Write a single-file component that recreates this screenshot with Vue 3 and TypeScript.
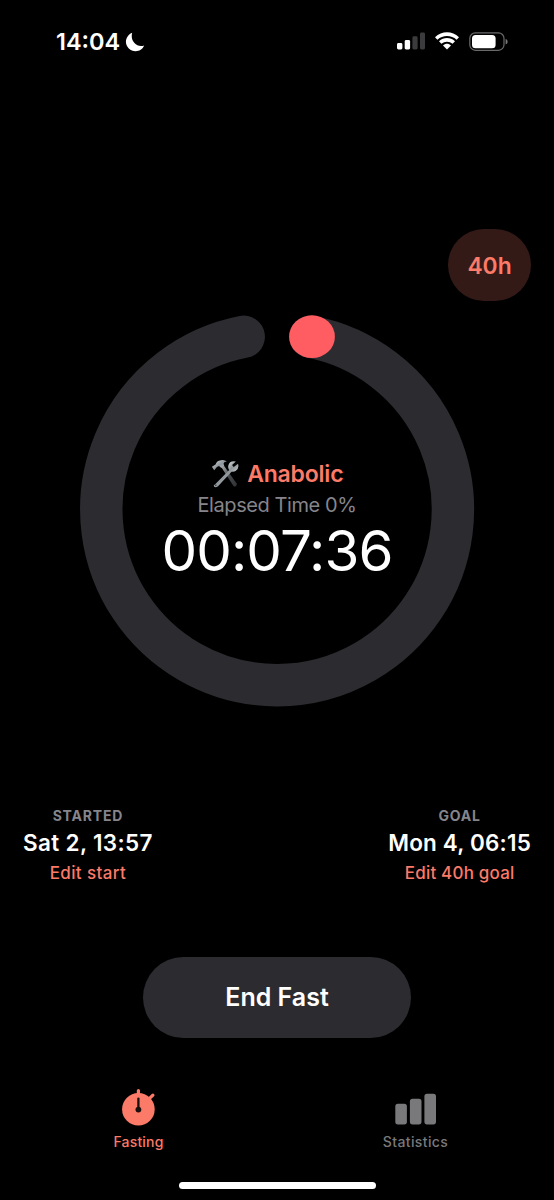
<script setup lang="ts">
interface Period {
  label: string
  value: string
  action: string
  side: string
}

const periods: Period[] = [
  { label: 'STARTED', value: 'Sat 2, 13:57', action: 'Edit start', side: 'start' },
  { label: 'GOAL', value: 'Mon 4, 06:15', action: 'Edit 40h goal', side: 'goal' },
]
</script>

<template>
  <main class="screen">
    <header class="status">
      <div class="clock">
        <span class="time">14:04</span>
        <svg class="moon" width="20" height="20" viewBox="0 0 20 20">
          <path d="M7.2 .8A9.5 9.5 0 1 0 19.2 13.4C12.2 16.2 4.7 9.2 7.2 .8Z" fill="#fff" />
        </svg>
      </div>
      <div class="indicators">
        <svg width="29" height="18" viewBox="0 0 29 18">
          <rect x="0" y="11" width="5.4" height="6.5" rx="1.4" fill="#fff" />
          <rect x="7.7" y="8" width="5.4" height="9.5" rx="1.4" fill="#fff" />
          <rect x="15.4" y="4.3" width="5.2" height="13.2" rx="1.4" fill="#3b3b3d" />
          <rect x="23" y=".5" width="5" height="17" rx="1.4" fill="#3b3b3d" />
        </svg>
        <svg class="wifi" width="24" height="18" viewBox="0 0 24 18">
          <path d="M0 5.2C6.8-1.4 17.2-1.4 24 5.2L21.6 7.7C16.2 2.7 7.8 2.7 2.4 7.7Z" fill="#fff" />
          <path d="M4 9.3C8.6 5 15.4 5 20 9.3L17.6 11.8C14.3 8.9 9.7 8.9 6.4 11.8Z" fill="#fff" />
          <path d="M8 13.4C10.3 11.3 13.7 11.3 16 13.4L12 17.6Z" fill="#fff" />
        </svg>
        <svg class="battery" width="40" height="20" viewBox="0 0 40 20">
          <rect x=".8" y=".9" width="34.2" height="17.4" rx="5.5" fill="none" stroke="#6a6a6c" stroke-width="1.2" />
          <rect x="3" y="3" width="23.6" height="13.2" rx="3.5" fill="#fff" />
          <path d="M36.6 6.8Q38.7 7.8 38.7 9.7T36.6 12.6Z" fill="#77777a" />
        </svg>
      </div>
    </header>

    <div class="plan-row">
      <button class="plan"><span>40h</span></button>
    </div>

    <section class="dial">
      <svg class="ring" width="396" height="396" viewBox="0 0 396 396">
        <path d="M164.7 24.8A175.8 175.8 0 1 0 231.5 24.8" fill="none" stroke="#2c2b30" stroke-width="42.4" stroke-linecap="round" />
        <ellipse cx="233" cy="24.7" rx="22.9" ry="21.4" fill="#ff5d62" />
      </svg>
      <div class="readout">
        <div class="phase">
          <svg class="tools" width="28" height="29" viewBox="0 0 28 29">
            <defs>
              <linearGradient id="steel" x1="0" y1="0" x2="1" y2="1">
                <stop offset="0" stop-color="#d8dde0" />
                <stop offset=".5" stop-color="#8f969b" />
                <stop offset="1" stop-color="#c4c9cc" />
              </linearGradient>
              <linearGradient id="grip" x1="0" y1="0" x2="1" y2="1">
                <stop offset="0" stop-color="#a7acaf" />
                <stop offset=".5" stop-color="#45484b" />
                <stop offset="1" stop-color="#303235" />
              </linearGradient>
            </defs>
            <path d="M10.5 8.5L13 6.8L25.8 24.7Q26 27.6 22.8 27.5Z" fill="url(#grip)" />
            <path d="M4.2 25.3L19 10.2L21 12.3L7 27.3Q4.3 28.9 3 27.5Q2 26.2 4.2 25.3Z" fill="url(#steel)" />
            <path d="M24.9 2.6L21.1 6.1L22.7 8L27 4.8Q28.5 9.4 24.6 12Q21.4 13.5 18.6 11.4Q16.2 8.9 17.7 5.5Q19.5 1.1 24.9 2.6Z" fill="url(#steel)" />
            <path d="M.9 7.8L4.5 5.5Q5.5 1.8 10 1.2Q13.4.4 15.8 2.6Q12.9 2.7 12.5 4.8L13.2 6.8L10.3 9L8 7.1L5.9 8L3.2 11.2Z" fill="url(#steel)" />
            <circle cx="4.8" cy="26.2" r=".8" fill="#34373a" />
          </svg>
          <span class="phase-name">Anabolic</span>
        </div>
        <div class="elapsed"><span>Elapsed Time 0%</span></div>
        <div class="timer"><span>00:07:36</span></div>
      </div>
    </section>

    <section class="periods">
      <div v-for="p in periods" :key="p.label" class="period" :class="p.side">
        <span class="label">{{ p.label }}</span>
        <span class="value">{{ p.value }}</span>
        <span class="action">{{ p.action }}</span>
      </div>
    </section>

    <button class="end"><span>End Fast</span></button>

    <nav class="tabs">
      <a class="tab active">
        <svg width="36" height="38" viewBox="0 0 36 38">
          <circle cx="17.4" cy="21.2" r="16.3" fill="#fc7a68" />
          <path d="M17.4 2.6V7M28.8 10.2L31.9 7.1" stroke="#fc7a68" stroke-width="3.2" stroke-linecap="round" />
          <path d="M17.4 10.6V21.5" stroke="#17100f" stroke-width="2.3" stroke-linecap="round" />
          <circle cx="17.4" cy="21.6" r="2.9" fill="#17100f" />
        </svg>
        <span>Fasting</span>
      </a>
      <a class="tab">
        <svg width="42" height="38" viewBox="0 0 42 38">
          <rect x=".3" y="15.8" width="11.6" height="20.6" rx="2.6" fill="#79797b" />
          <rect x="14.9" y="10.8" width="11.6" height="25.6" rx="2.6" fill="#79797b" />
          <rect x="29.4" y="5.8" width="11.6" height="30.6" rx="2.6" fill="#79797b" />
        </svg>
        <span class="stats">Statistics</span>
      </a>
    </nav>
    <div class="home"></div>
  </main>
</template>

<style>
body {
  margin: 0;
  background: #000;
}
</style>

<style scoped>
.screen {
  width: 554px;
  height: 1200px;
  overflow: hidden;
  box-sizing: border-box;
  display: flex;
  flex-direction: column;
  background: #000;
  color: #fff;
  font-family: Inter, "Liberation Sans", sans-serif;
}
svg {
  display: block;
  flex: none;
}
button {
  border: 0;
  padding: 0;
  font: inherit;
  color: inherit;
}
span {
  white-space: nowrap;
}
.status {
  height: 52px;
  padding: 30px 45px 0 56px;
  box-sizing: border-box;
  display: flex;
  justify-content: space-between;
}
.clock,
.indicators {
  display: flex;
  align-items: flex-start;
}
.time {
  font-size: 23.5px;
  line-height: 24px;
  font-weight: 600;
  letter-spacing: 0;
}
.moon {
  margin: 2px 0 0 5px;
}
.indicators {
  padding-top: 2px;
}
.wifi {
  margin-left: 9px;
}
.battery {
  margin-left: 10px;
}
.plan-row {
  margin-top: 177px;
  padding-right: 23px;
  display: flex;
  justify-content: flex-end;
}
.plan {
  width: 83px;
  height: 72px;
  border-radius: 36px;
  background: #341a17;
  color: #fc7a68;
  font-size: 22.8px;
  font-weight: 600;
}
.dial {
  margin: 11px auto 0;
  display: grid;
  width: 396px;
  height: 396px;
}
.ring,
.readout {
  grid-area: 1 / 1;
}
.readout {
  padding-top: 146px;
  display: flex;
  flex-direction: column;
  align-items: center;
}
.phase {
  display: flex;
  height: 32px;
  align-items: center;
  gap: 8.5px;
  font-size: 23px;
  font-weight: 600;
  letter-spacing: -0.2px;
  color: #fc7a68;
}
.tools {
  margin-top: -1px;
}
.elapsed {
  height: 30px;
  line-height: 30px;
  font-size: 20px;
  letter-spacing: -0.42px;
  color: #85858b;
}
.timer {
  height: 62px;
  line-height: 62px;
  font-size: 56.5px;
  letter-spacing: -0.9px;
}
.periods {
  margin-top: 97px;
  padding: 0 23px;
  display: flex;
  justify-content: space-between;
}
.period {
  display: flex;
  flex-direction: column;
  align-items: center;
}
.label {
  height: 22px;
  line-height: 22px;
  font-size: 14px;
  font-weight: 700;
  letter-spacing: 0.8px;
  color: #85858b;
}
.value {
  height: 32px;
  line-height: 32px;
  font-size: 22.5px;
  font-weight: 600;
  letter-spacing: 0.18px;
}
.start .value {
  letter-spacing: 0.34px;
}
.action {
  height: 28px;
  line-height: 28px;
  font-size: 17px;
  font-weight: 500;
  letter-spacing: 0.2px;
  color: #fc7a68;
}
.start .action {
  letter-spacing: 0.38px;
}
.end {
  width: 268px;
  height: 81px;
  margin: 70px auto 0;
  padding-bottom: 2px;
  border-radius: 41px;
  background: #2c2b30;
  font-size: 25px;
  font-weight: 600;
}
.tabs {
  height: 68px;
  margin-top: 50px;
  display: grid;
  grid-template-columns: 1fr 1fr;
}
.tab {
  display: flex;
  flex-direction: column;
  align-items: center;
  color: #79797b;
  font-size: 14px;
  font-weight: 500;
  line-height: 24px;
  letter-spacing: 0.2px;
}
.tab svg {
  margin-bottom: 4px;
}
.stats {
  letter-spacing: 0.38px;
}
.active {
  color: #fc7a68;
}
.home {
  width: 197px;
  height: 7px;
  border-radius: 4px;
  margin: 26px auto 0;
  background: #fff;
}
</style>
